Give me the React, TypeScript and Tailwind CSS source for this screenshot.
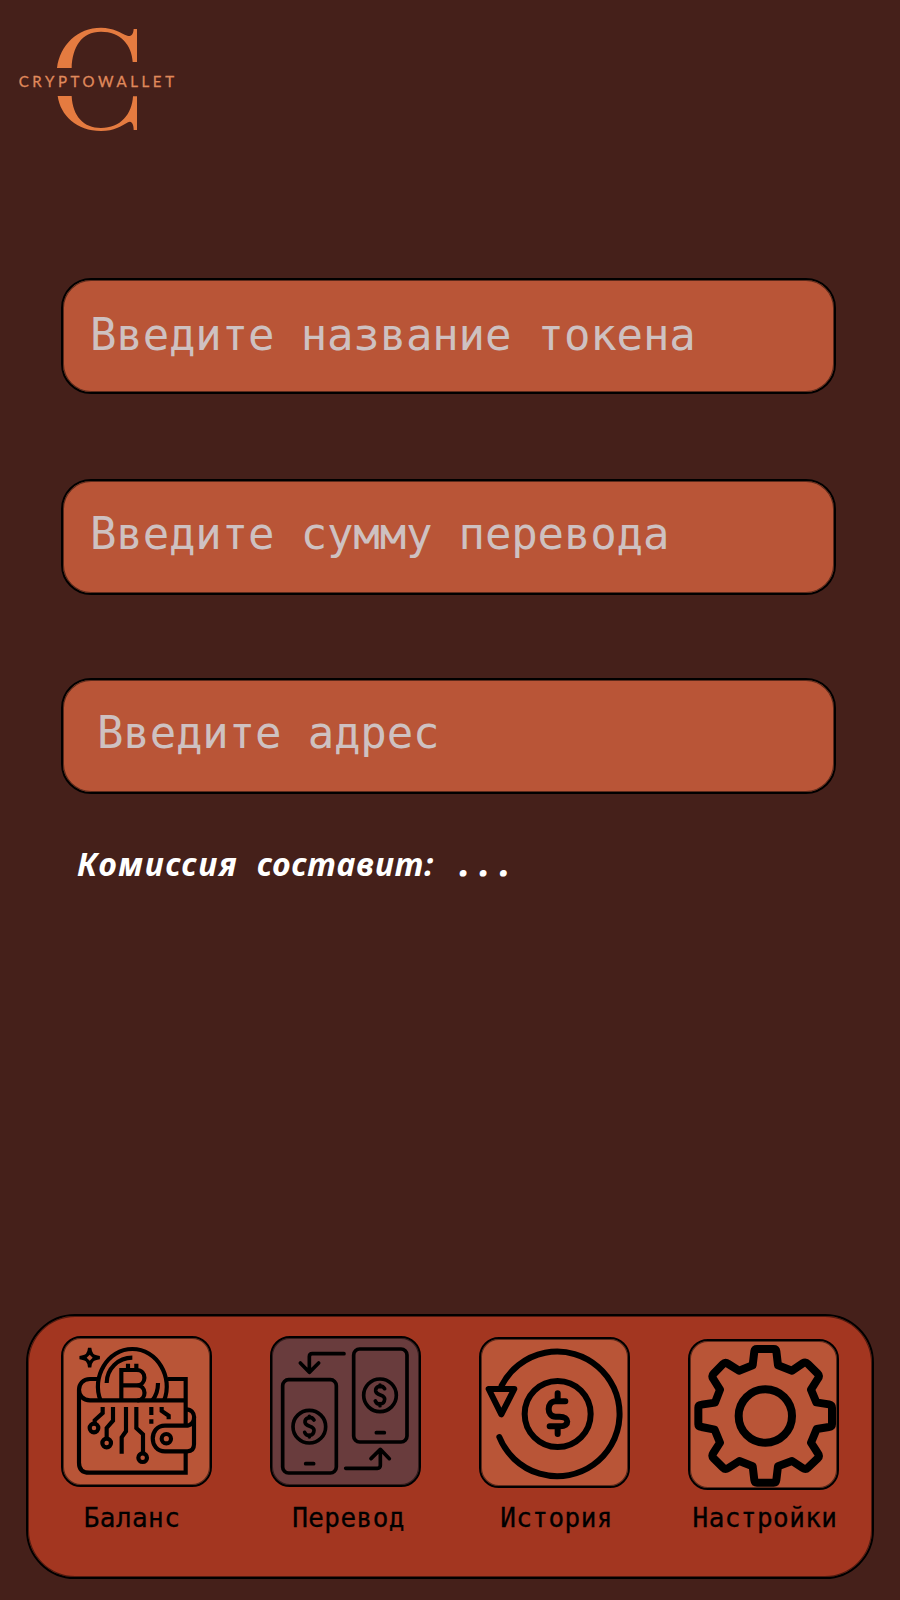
import type { ReactNode } from "react";

function Logo() {
  return (
    <svg className="h-[140px] w-[200px]" viewBox="0 0 600 420" fill="#e57b40">
      <path d="M171 174C180 105 232 53 303 53C340 53 362 69 382 77C393 81 400 73 401 57H411V156H398C396 105 361 65 303 65C244 65 217 112 215 174Z" />
      <path d="M173 258H215C218 319 251 354 303 354C362 354 396 313 399 259H411V360H401C401 343 395 330 384 337C363 349 344 363 303 363C230 363 181 316 173 258Z" />
      <text x="56" y="232" fontSize="45" textLength="466" lengthAdjust="spacing" fontFamily="Lato, sans-serif" fill="#e08a5c" stroke="#e08a5c" strokeWidth="0.8">
        CRYPTOWALLET
      </text>
    </svg>
  );
}

function WalletIcon() {
  return (
    <svg className="size-full overflow-visible" viewBox="24 24 441 441" fill="none" stroke="#000" strokeWidth="12.5">
      <path d="M104 54C106 74 112 80 134 83C112 86 106 92 104 112C102 92 96 86 74 83C96 80 102 74 104 54Z" strokeWidth="10" fill="#000" />
      <path d="M104 74L113 83L104 92L95 83Z" fill="#b95537" stroke="none" />
      <path d="M137 212C108 142 158 57 232 57C306 57 356 142 327 212" />
      <path d="M155 159C155 116 190 83 232 83M309 159C309 181 303 198 292 211" />
      <path d="M199 211V120H245C276 120 276 166 245 166H199M245 166C276 166 276 211 247 211M219 101V120M244 101V120" />
      <path d="M129 147H105C61 147 61 211 105 211H392V147H338M72 180V398Q72 428 103 428H392V367M392 211V286" />
      <path d="M392 238C426 236 426 287 392 287H330C281 287 281 364 330 364H397Q417 364 417 343V262" />
      <circle cx="334" cy="326" r="14" />
      <path d="M143 231V249L119 271V279M174 231V272L155 294V321M213 231V304L200 322V371M244 231V294L264 313V367M289 231V255M289 268V281M320 231V243L341 257V268" />
      <circle cx="117" cy="294" r="13" />
      <circle cx="155" cy="339" r="13" />
      <circle cx="263" cy="383" r="13" />
    </svg>
  );
}

function TransferIcon() {
  return (
    <svg className="size-full overflow-visible" viewBox="21 24 441 441" fill="none" stroke="#000" strokeWidth="11" strokeLinecap="round" strokeLinejoin="round">
      <rect x="53" y="149" width="161" height="280" rx="18" />
      <rect x="266" y="57" width="160" height="279" rx="18" />
      <circle cx="133" cy="290" r="49" />
      <circle cx="345" cy="196" r="49" />
      <path d="M122 401H146M334 308H358" />
      <path d="M237 71H142Q133 71 133 80V127M106 99L133 127L161 99" />
      <path d="M242 415H337Q346 415 346 406V358M318 386L346 358L373 386" />
      <path d="M147 270C138 256 119 263 120 277C122 292 147 286 147 301C146 320 124 320 119 307M133 259V264M133 315V321" />
      <path d="M359 176C350 162 331 169 332 183C334 198 359 192 359 207C358 226 336 226 331 213M345 165V170M345 221V227" />
    </svg>
  );
}

function HistoryIcon() {
  return (
    <svg className="size-full overflow-visible" viewBox="24 27 441 441" fill="none" stroke="#000" strokeWidth="18" strokeLinecap="round" strokeLinejoin="round">
      <path d="M86 167A187 187 0 1 1 79 321" />
      <path d="M47 177H124L85 253Z" />
      <circle cx="254" cy="252" r="99" />
      <path d="M277 214H248C220 214 220 260 248 260H260C290 260 290 289 262 289H230M254 190V214M254 289V312" />
    </svg>
  );
}

function GearIcon() {
  return (
    <svg className="size-full overflow-visible" viewBox="30 33 441 441" fill="none" stroke="#000" strokeWidth="24" strokeLinejoin="round">
      <path d="M231 57H281Q288 57 289 64L294 106L336 122L368 100Q377 95 384 102L413 131Q420 138 413 147L393 179L409 217L447 223Q456 225 456 233V283Q456 290 447 291L410 297L393 338L413 369Q420 378 413 385L384 413Q377 420 368 414L336 393L294 409L289 450Q288 458 281 458H231Q224 458 223 450L218 409L178 393L145 414Q136 420 129 413L101 385Q94 378 100 369L120 338L104 299L65 291Q55 290 55 283V233Q55 225 65 224L105 218L120 179L100 147Q94 138 101 131L129 102Q136 95 145 102L177 122L218 106L223 64Q224 57 231 57Z" />
      <circle cx="256" cy="258" r="80" />
    </svg>
  );
}

function Field({ children, className }: { children: ReactNode; className: string }) {
  return (
    <div
      className={`flex h-[116px] w-[775px] items-center rounded-[30px] border-2 border-black bg-[#b95537] font-['DejaVu_Sans_Mono',monospace] text-[44px] leading-none tracking-[-0.16px] whitespace-pre text-[#cec1c1] shadow-[inset_0_0_0_1px_rgba(0,0,0,0.5)] ${className}`}
    >
      {children}
    </div>
  );
}

function NavItem({ icon, label, tile, text }: { icon: ReactNode; label: string; tile: string; text: string }) {
  return (
    <div className="flex w-[151px] flex-col items-center">
      <div className={`size-[151px] shrink-0 rounded-[20px] border-2 border-black shadow-[inset_0_0_0_1px_rgba(0,0,0,0.5)] ${tile}`}>{icon}</div>
      <span
        className={`font-['DejaVu_Sans_Mono',monospace] text-[26px] leading-[30px] tracking-[0.45px] whitespace-nowrap text-black [-webkit-text-stroke:0.3px_black] ${text}`}
      >
        {label}
      </span>
    </div>
  );
}

export default function App() {
  return (
    <main className="flex h-[1600px] w-[900px] flex-col overflow-hidden bg-[#45201a]">
      <header className="h-[278px] shrink-0 pt-[10px]">
        <Logo />
      </header>
      <section className="flex flex-col pl-[61px]">
        <Field className="pb-[2px] pl-[27px]">Введите название токена</Field>
        <Field className="mt-[85px] pb-[6px] pl-[27px]">Введите сумму перевода</Field>
        <Field className="mt-[83px] pb-[6px] pl-[34px]">Введите адрес</Field>
        <p className="mt-[48px] pl-[16px] font-['Noto_Sans',sans-serif] text-[32px] leading-[44px] font-bold whitespace-pre text-white italic">
          <span className="inline-block w-[180px] tracking-[1.7px]">Комиссия </span>
          <span className="inline-block w-[203px] tracking-[0.9px]">составит: </span>
          <span className="inline-block tracking-[10.9px] [-webkit-text-stroke:1.2px_white]">...</span>
        </p>
      </section>
      <nav className="mx-[26px] mt-auto mb-[21px] flex h-[265px] gap-[58px] rounded-[49px] border-2 border-black bg-[#a33620] pt-5 pl-[33px] shadow-[inset_0_0_0_1px_rgba(0,0,0,0.5)]">
        <NavItem icon={<WalletIcon />} label="Баланс" tile="bg-[#b95537]" text="mt-[16px] -ml-[9px]" />
        <NavItem icon={<TransferIcon />} label="Перевод" tile="bg-[#693c3d]" text="mt-[16px] ml-[6px]" />
        <NavItem icon={<HistoryIcon />} label="История" tile="mt-px bg-[#b95537]" text="mt-[15px] ml-1" />
        <NavItem icon={<GearIcon />} label="Настройки" tile="mt-[3px] bg-[#b95537]" text="mt-[13px] ml-[3px]" />
      </nav>
    </main>
  );
}
